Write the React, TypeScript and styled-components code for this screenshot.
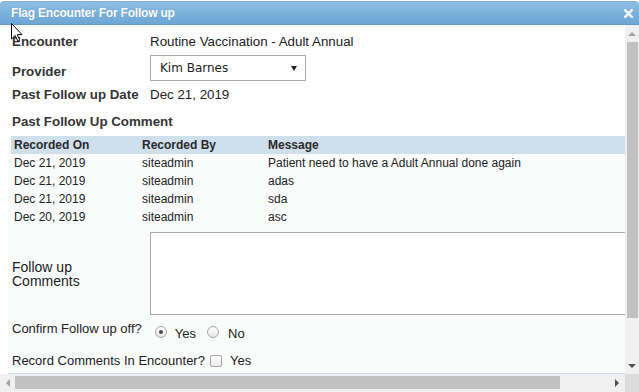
import React from "react";
import styled, { createGlobalStyle } from "styled-components";

const GlobalStyle = createGlobalStyle`
  html, body { margin: 0; padding: 0; background: #fff; overflow: hidden; }
  * { box-sizing: border-box; }
`;

const Dialog = styled.div`
  position: relative;
  width: 639px;
  height: 392px;
  display: flex;
  flex-direction: column;
  background: #fff;
  font-family: "Liberation Sans", Arial, sans-serif;
  color: #222;
  overflow: hidden;
`;

const TitleBar = styled.div`
  flex: none;
  margin-top: 1px;
  height: 24px;
  display: flex;
  align-items: center;
  justify-content: space-between;
  padding: 0 6px 0 11px;
  border-radius: 4px 4px 0 0;
  background: linear-gradient(#90bee2, #7db3dc 45%, #6ba6d5);
  border-top: 1px solid #7fb1d9;
  border-bottom: 1px solid #5f9acb;
`;

const Title = styled.span`
  color: #fff;
  font-size: 12px;
  font-weight: bold;
  letter-spacing: -0.2px;
  text-shadow: 0 0 1px rgba(40, 90, 140, 0.4);
`;

const CloseIcon = styled.svg`
  width: 9px;
  height: 9px;
  display: block;
`;

const Body = styled.div`
  flex: 1;
  display: flex;
  min-height: 0;
`;

const Content = styled.div`
  flex: 1;
  min-width: 0;
  display: flex;
  flex-direction: column;
  overflow: hidden;
`;

const Info = styled.div`
  padding-left: 12px;
  font-size: 13.33px;
  line-height: 15px;
`;

const FieldRow = styled.div<{ $h: number; $pt?: number }>`
  display: grid;
  grid-template-columns: 138px auto;
  align-items: start;
  height: ${(p) => p.$h}px;
  padding-top: ${(p) => p.$pt ?? 0}px;
`;

const Label = styled.div<{ $pt?: number }>`
  padding-top: ${(p) => p.$pt ?? 0}px;
  font-weight: bold;
  color: #353535;
  white-space: nowrap;
`;

const Value = styled.div`
  color: #222;
  white-space: nowrap;
`;

const SelectBox = styled.div`
  width: 156px;
  height: 26px;
  border: 1px solid #a9a9a9;
  background: #fff;
  display: flex;
  align-items: center;
  justify-content: space-between;
  padding: 0 8px 0 9px;
  font-family: "DejaVu Sans", Verdana, sans-serif;
  font-size: 12px;
  color: #222;
`;

const Caret = styled.svg`
  width: 6px;
  height: 5px;
  display: block;
`;

const Heading = styled.div`
  height: 33px;
  padding-top: 11px;
  font-weight: bold;
  color: #353535;
`;

const Section = styled.div`
  flex: 1;
  margin-left: 8px;
  padding-left: 3px;
  background: #fafcfc;
  border-bottom: 1px solid #c9ddee;
  display: flex;
  flex-direction: column;
`;

const Table = styled.table`
  width: 100%;
  border-collapse: collapse;
  table-layout: fixed;
  font-size: 12px;
  line-height: 18px;
`;

const Th = styled.th<{ $w?: number }>`
  ${(p) => (p.$w ? `width: ${p.$w}px;` : "")}
  height: 18px;
  padding: 0 0 0 3px;
  text-align: left;
  font-weight: bold;
  color: #2a2a2a;
  background: #cfdfec;
`;

const Td = styled.td`
  height: 18px;
  padding: 0 0 0 3px;
  color: #222;
  white-space: nowrap;
  overflow: hidden;
`;

const FormRow = styled.div<{ $mt: number }>`
  display: grid;
  grid-template-columns: 138px auto;
  align-items: center;
  margin-top: ${(p) => p.$mt}px;
  padding-left: 1px;
  font-size: 14px;
  line-height: 14px;
`;

const CommentLabel = styled.div`
  max-width: 90px;
  color: #222;
`;

const TextArea = styled.textarea`
  width: 490px;
  height: 83px;
  border: 1px solid #a9a9a9;
  background: #fff;
  resize: none;
  margin: 0;
  display: block;
`;

const InlineRow = styled.div<{ $mt: number }>`
  display: flex;
  align-items: center;
  height: 15px;
  margin-top: ${(p) => p.$mt}px;
  padding-left: 1px;
  font-size: 13px;
  line-height: 15px;
  white-space: nowrap;
`;

const Option = styled.label<{ $ml: number; $drop?: number }>`
  display: flex;
  align-items: center;
  margin-left: ${(p) => p.$ml}px;
  padding-top: ${(p) => p.$drop ?? 0}px;
`;

const OptionText = styled.span<{ $ml: number; $pt?: number }>`
  margin-left: ${(p) => p.$ml}px;
  padding-top: ${(p) => p.$pt ?? 0}px;
`;

const Radio = styled.span<{ $checked?: boolean }>`
  width: 12px;
  height: 12px;
  border-radius: 50%;
  border: 1px solid #a6a6a6;
  background: linear-gradient(#fdfdfd, #e8e8e8);
  display: flex;
  align-items: center;
  justify-content: center;
  &::after {
    content: "";
    width: 4px;
    height: 4px;
    border-radius: 50%;
    background: ${(p) => (p.$checked ? "#4a4a4a" : "transparent")};
  }
`;

const Checkbox = styled.span`
  width: 12px;
  height: 12px;
  border-radius: 2px;
  border: 1px solid #a6a6a6;
  background: linear-gradient(#fdfdfd, #ececec);
`;

const VScroll = styled.div`
  width: 14px;
  flex: none;
  background: #f0f0f0;
  display: flex;
  flex-direction: column;
  align-items: stretch;
`;

const ArrowBox = styled.div<{ $w?: number; $h?: number }>`
  flex: none;
  width: ${(p) => (p.$w ? `${p.$w}px` : "auto")};
  height: ${(p) => (p.$h ? `${p.$h}px` : "auto")};
  display: flex;
  align-items: center;
  justify-content: center;
`;

const Tri = styled.span<{ $dir: "up" | "down" | "left" | "right"; $color: string }>`
  width: 0;
  height: 0;
  ${(p) =>
    p.$dir === "up"
      ? `border-left: 4px solid transparent; border-right: 4px solid transparent; border-bottom: 4px solid ${p.$color};`
      : p.$dir === "down"
      ? `border-left: 4px solid transparent; border-right: 4px solid transparent; border-top: 4px solid ${p.$color};`
      : p.$dir === "left"
      ? `border-top: 4px solid transparent; border-bottom: 4px solid transparent; border-right: 4px solid ${p.$color};`
      : `border-top: 4px solid transparent; border-bottom: 4px solid transparent; border-left: 4px solid ${p.$color};`}
`;

const VThumb = styled.div`
  flex: none;
  height: 276px;
  margin: 0 1px 0 2px;
  background: #c1c1c1;
`;

const Spacer = styled.div`
  flex: 1;
`;

const HScrollRow = styled.div`
  flex: none;
  height: 18px;
  display: flex;
`;

const HTrack = styled.div`
  flex: 1;
  display: flex;
  align-items: stretch;
  background: #f0f0f0;
`;

const HThumb = styled.div`
  flex: none;
  width: 545px;
  margin: 2px 0 3px;
  background: #c1c1c1;
`;

const Corner = styled.div`
  width: 14px;
  flex: none;
  background: #dcdcdc;
`;

const Cursor = styled.svg`
  position: absolute;
  left: 11px;
  top: 23px;
  width: 12px;
  height: 19px;
  pointer-events: none;
`;

const rows = [
  { on: "Dec 21, 2019", by: "siteadmin", msg: "Patient need to have a Adult Annual done again" },
  { on: "Dec 21, 2019", by: "siteadmin", msg: "adas" },
  { on: "Dec 21, 2019", by: "siteadmin", msg: "sda" },
  { on: "Dec 20, 2019", by: "siteadmin", msg: "asc" },
];

export default function App() {
  return (
    <>
      <GlobalStyle />
      <Dialog>
        <TitleBar>
          <Title>Flag Encounter For Follow up</Title>
          <CloseIcon viewBox="0 0 9 9">
            <path d="M1.2 1.2 L7.8 7.8 M7.8 1.2 L1.2 7.8" stroke="#f4f8fc" strokeWidth="2.4" strokeLinecap="square" />
          </CloseIcon>
        </TitleBar>
        <Body>
          <Content>
            <Info>
              <FieldRow $h={30} $pt={9}>
                <Label>Encounter</Label>
                <Value>Routine Vaccination - Adult Annual</Value>
              </FieldRow>
              <FieldRow $h={26}>
                <Label $pt={9}>Provider</Label>
                <SelectBox>
                  <span>Kim Barnes</span>
                  <Caret viewBox="0 0 6 5">
                    <path d="M0 0 H6 L3 5 Z" fill="#222" />
                  </Caret>
                </SelectBox>
              </FieldRow>
              <FieldRow $h={22} $pt={6}>
                <Label>Past Follow up Date</Label>
                <Value>Dec 21, 2019</Value>
              </FieldRow>
              <Heading>Past Follow Up Comment</Heading>
            </Info>
            <Section>
              <Table>
                <thead>
                  <tr>
                    <Th $w={128}>Recorded On</Th>
                    <Th $w={126}>Recorded By</Th>
                    <Th>Message</Th>
                  </tr>
                </thead>
                <tbody>
                  {rows.map((r, i) => (
                    <tr key={i}>
                      <Td>{r.on}</Td>
                      <Td>{r.by}</Td>
                      <Td>{r.msg}</Td>
                    </tr>
                  ))}
                </tbody>
              </Table>
              <FormRow $mt={6}>
                <CommentLabel>Follow up Comments</CommentLabel>
                <TextArea />
              </FormRow>
              <InlineRow $mt={6}>
                <span>Confirm Follow up off?</span>
                <Option $ml={13} $drop={6}>
                  <Radio $checked />
                  <OptionText $ml={8} $pt={3}>Yes</OptionText>
                </Option>
                <Option $ml={11} $drop={6}>
                  <Radio />
                  <OptionText $ml={9} $pt={3}>No</OptionText>
                </Option>
              </InlineRow>
              <InlineRow $mt={17}>
                <span>Record Comments In Encounter?</span>
                <Option $ml={5}>
                  <Checkbox />
                  <OptionText $ml={8}>Yes</OptionText>
                </Option>
              </InlineRow>
            </Section>
          </Content>
          <VScroll>
            <ArrowBox $h={17}>
              <Tri $dir="up" $color="#a3a3a3" />
            </ArrowBox>
            <VThumb />
            <Spacer />
            <ArrowBox $h={17}>
              <Tri $dir="down" $color="#505050" />
            </ArrowBox>
          </VScroll>
        </Body>
        <HScrollRow>
          <HTrack>
            <ArrowBox $w={15}>
              <Tri $dir="left" $color="#a3a3a3" />
            </ArrowBox>
            <HThumb />
            <Spacer />
            <ArrowBox $w={17}>
              <Tri $dir="right" $color="#505050" />
            </ArrowBox>
          </HTrack>
          <Corner />
        </HScrollRow>
        <Cursor viewBox="0 0 12 19">
          <path d="M0.5 0.5 L0.5 16 L4.2 12.4 L6.8 18.2 L8.8 17.3 L6.3 11.6 L11 11.6 Z" fill="#fff" stroke="#000" strokeWidth="1" strokeLinejoin="miter" />
        </Cursor>
      </Dialog>
    </>
  );
}
